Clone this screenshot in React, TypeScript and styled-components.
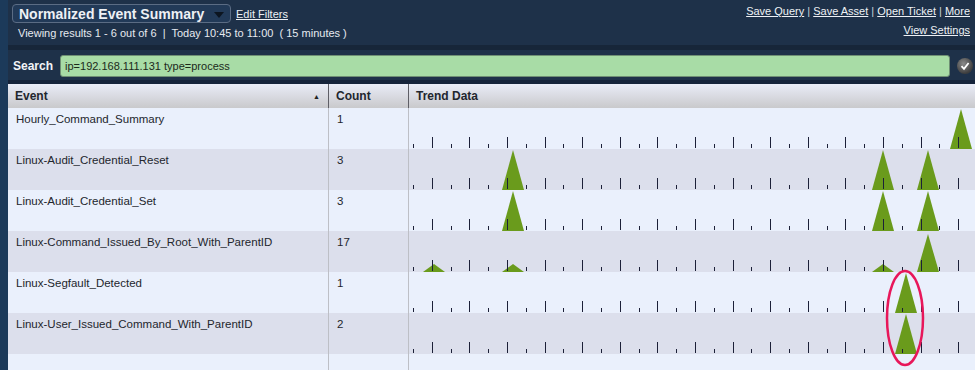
import styled, { createGlobalStyle } from 'styled-components';

const GlobalStyle = createGlobalStyle`
	body {
		margin: 0;
		background: #1b3350;
		font-family: "Liberation Sans", Arial, sans-serif;
	}
`;

type Peak = { x: number; h: number };

const TREND_LEFT = 409;
const ROW_H = 41;

const rows: { name: string; count: number; peaks: Peak[] }[] = [
	{ name: 'Hourly_Command_Summary', count: 1, peaks: [{ x: 961, h: 1 }] },
	{
		name: 'Linux-Audit_Credential_Reset',
		count: 3,
		peaks: [{ x: 513, h: 1 }, { x: 883, h: 1 }, { x: 928, h: 1 }]
	},
	{
		name: 'Linux-Audit_Credential_Set',
		count: 3,
		peaks: [{ x: 513, h: 1 }, { x: 883, h: 1 }, { x: 928, h: 1 }]
	},
	{
		name: 'Linux-Command_Issued_By_Root_With_ParentID',
		count: 17,
		peaks: [
			{ x: 434, h: 0.2 },
			{ x: 513, h: 0.2 },
			{ x: 883, h: 0.2 },
			{ x: 928, h: 0.95 }
		]
	},
	{ name: 'Linux-Segfault_Detected', count: 1, peaks: [{ x: 906, h: 1 }] },
	{ name: 'Linux-User_Issued_Command_With_ParentID', count: 2, peaks: [{ x: 906, h: 1 }] }
];

const ticks = Array.from({ length: 30 }, (_, i) => ({
	x: Math.round(413 + i * 18.8) - TREND_LEFT + 0.5,
	tall: i % 2 === 1
}));

const Page = styled.div`
	position: relative;
	width: 975px;
	height: 370px;
	overflow: hidden;
	display: flex;
`;

const LeftStrip = styled.div`
	width: 8px;
	flex-shrink: 0;
	background: #1c3a5a;
`;

const Main = styled.div`
	flex: 1;
	display: flex;
	flex-direction: column;
	background: #1e3149;
	min-height: 0;
`;

const TopBar = styled.div`
	height: 50px;
	flex-shrink: 0;
	box-sizing: border-box;
	display: flex;
	justify-content: space-between;
	padding: 4px 5px 0 4px;
	border-bottom: 5px solid #172639;
`;

const TitleBlock = styled.div`
	display: flex;
	flex-direction: column;
	gap: 4px;
`;

const TitleLine = styled.div`
	display: flex;
	align-items: center;
	gap: 5px;
`;

const ViewSelect = styled.div`
	width: 219px;
	height: 19px;
	box-sizing: border-box;
	display: flex;
	align-items: center;
	justify-content: space-between;
	padding: 0 6px 0 6px;
	border: 1px solid #5b6c84;
	border-radius: 4px;
	background: #223a58;
	color: #eef1f5;
	font-size: 14px;
	font-weight: bold;
	white-space: nowrap;
`;

const Caret = styled.span`
	width: 0;
	height: 0;
	border-left: 5px solid transparent;
	border-right: 5px solid transparent;
	border-top: 6px solid #0c1520;
	margin-top: 2px;
`;

const Link = styled.a`
	color: #eef1f5;
	font-size: 11px;
	text-decoration: underline;
	cursor: pointer;
	white-space: nowrap;
`;

const SubLine = styled.div`
	color: #e6eaf0;
	font-size: 11px;
	padding-left: 6px;
	white-space: pre;
`;

const Actions = styled.div`
	display: flex;
	flex-direction: column;
	align-items: flex-end;
	gap: 7px;
	padding-top: 1px;
`;

const ActionLine = styled.div`
	color: #c8d0da;
	font-size: 11px;
	white-space: pre;
`;

const SearchRow = styled.div`
	height: 34px;
	flex-shrink: 0;
	box-sizing: border-box;
	display: flex;
	align-items: flex-start;
	padding: 5px 0 0 5px;
	gap: 7px;
	border-bottom: 4px solid #15233a;
`;

const SearchLabel = styled.span`
	color: #f2f4f7;
	font-size: 12px;
	font-weight: bold;
	line-height: 22px;
`;

const SearchInput = styled.div`
	width: 890px;
	height: 22px;
	box-sizing: border-box;
	border: 1px solid #6f8f74;
	border-radius: 3px;
	background: #a8dca6;
	color: #1b2a1b;
	font-size: 11px;
	line-height: 20px;
	padding-left: 4px;
`;

const CheckButton = styled.div`
	width: 16px;
	height: 16px;
	margin-top: 3px;
	border-radius: 50%;
	background: radial-gradient(circle at 40% 35%, #8a8a8a, #3e3e3e 70%);
	display: flex;
	align-items: center;
	justify-content: center;
`;

const Table = styled.div`
	flex: 1;
	min-height: 0;
	display: grid;
	grid-template-columns: 321px 80px 1fr;
	grid-auto-rows: ${ROW_H}px;
	grid-template-rows: 24px;
	background: #eaf0fc;
`;

const HeadCell = styled.div<{ $last?: boolean }>`
	display: flex;
	align-items: center;
	justify-content: space-between;
	padding: 0 8px 0 7px;
	background: linear-gradient(#e9ecf7, #c9c9cc);
	border-right: ${(p) => (p.$last ? 'none' : '1px solid #5e5e66')};
	color: #22262e;
	font-size: 12px;
	font-weight: bold;
`;

const SortArrow = styled.span`
	font-size: 7px;
	color: #222;
`;

const Cell = styled.div<{ $alt: boolean; $last?: boolean }>`
	background: ${(p) => (p.$alt ? '#dcdfec' : '#eaf0fc')};
	border-right: ${(p) => (p.$last ? 'none' : '1px solid #bdbfc6')};
	color: #23262c;
	font-size: 11.5px;
	padding: 5px 0 0 8px;
	overflow: hidden;
	white-space: nowrap;
`;

const TrendCell = styled.div<{ $alt: boolean }>`
	background: ${(p) => (p.$alt ? '#dcdfec' : '#eaf0fc')};
	overflow: hidden;
`;

const Highlight = styled.svg`
	position: absolute;
	left: 884px;
	top: 268px;
	pointer-events: none;
`;

const Trend = ({ peaks }: { peaks: Peak[] }) => (
	<svg width="566" height={ROW_H} style={{ display: 'block' }}>
		{peaks.map((p, i) => {
			const cx = p.x - TREND_LEFT;
			const top = ROW_H - p.h * 40;
			return (
				<polygon
					key={i}
					points={`${cx - 11},${ROW_H} ${cx},${top} ${cx + 11},${ROW_H}`}
					fill="#6a9b1c"
				/>
			);
		})}
		{ticks.map((t, i) => (
			<line
				key={i}
				x1={t.x}
				x2={t.x}
				y1={ROW_H - (t.tall ? 12 : 5)}
				y2={ROW_H - 1}
				stroke="#1c2038"
				strokeWidth="1"
			/>
		))}
	</svg>
);

const App = () => {
	return (
		<Page>
			<GlobalStyle />
			<LeftStrip />
			<Main>
				<TopBar>
					<TitleBlock>
						<TitleLine>
							<ViewSelect>
								Normalized Event Summary
								<Caret />
							</ViewSelect>
							<Link>Edit Filters</Link>
						</TitleLine>
						<SubLine>
							Viewing results 1 - 6 out of 6  |  Today 10:45 to 11:00  ( 15 minutes )
						</SubLine>
					</TitleBlock>
					<Actions>
						<ActionLine>
							<Link>Save Query</Link> | <Link>Save Asset</Link> | <Link>Open Ticket</Link> |{' '}
							<Link>More</Link>
						</ActionLine>
						<Link>View Settings</Link>
					</Actions>
				</TopBar>
				<SearchRow>
					<SearchLabel>Search</SearchLabel>
					<SearchInput>ip=192.168.111.131 type=process</SearchInput>
					<CheckButton>
						<svg width="10" height="10" viewBox="0 0 10 10">
							<path d="M1.5 5.2 L4 7.8 L8.6 2" fill="none" stroke="#fff" strokeWidth="1.8" />
						</svg>
					</CheckButton>
				</SearchRow>
				<Table>
					<HeadCell>
						Event
						<SortArrow>▲</SortArrow>
					</HeadCell>
					<HeadCell>Count</HeadCell>
					<HeadCell $last>Trend Data</HeadCell>
					{rows.map((r, i) => {
						const alt = i % 2 === 1;
						return [
							<Cell key={`n${i}`} $alt={alt}>
								{r.name}
							</Cell>,
							<Cell key={`c${i}`} $alt={alt}>
								{r.count}
							</Cell>,
							<TrendCell key={`t${i}`} $alt={alt}>
								<Trend peaks={r.peaks} />
							</TrendCell>
						];
					})}
					<Cell $alt={false} />
					<Cell $alt={false} />
					<TrendCell $alt={false} />
				</Table>
			</Main>
			<Highlight width="44" height="100" viewBox="0 0 44 100">
				<ellipse cx="21" cy="50" rx="18" ry="47" fill="none" stroke="#e8175a" strokeWidth="2.5" />
			</Highlight>
		</Page>
	);
};

export default App;
